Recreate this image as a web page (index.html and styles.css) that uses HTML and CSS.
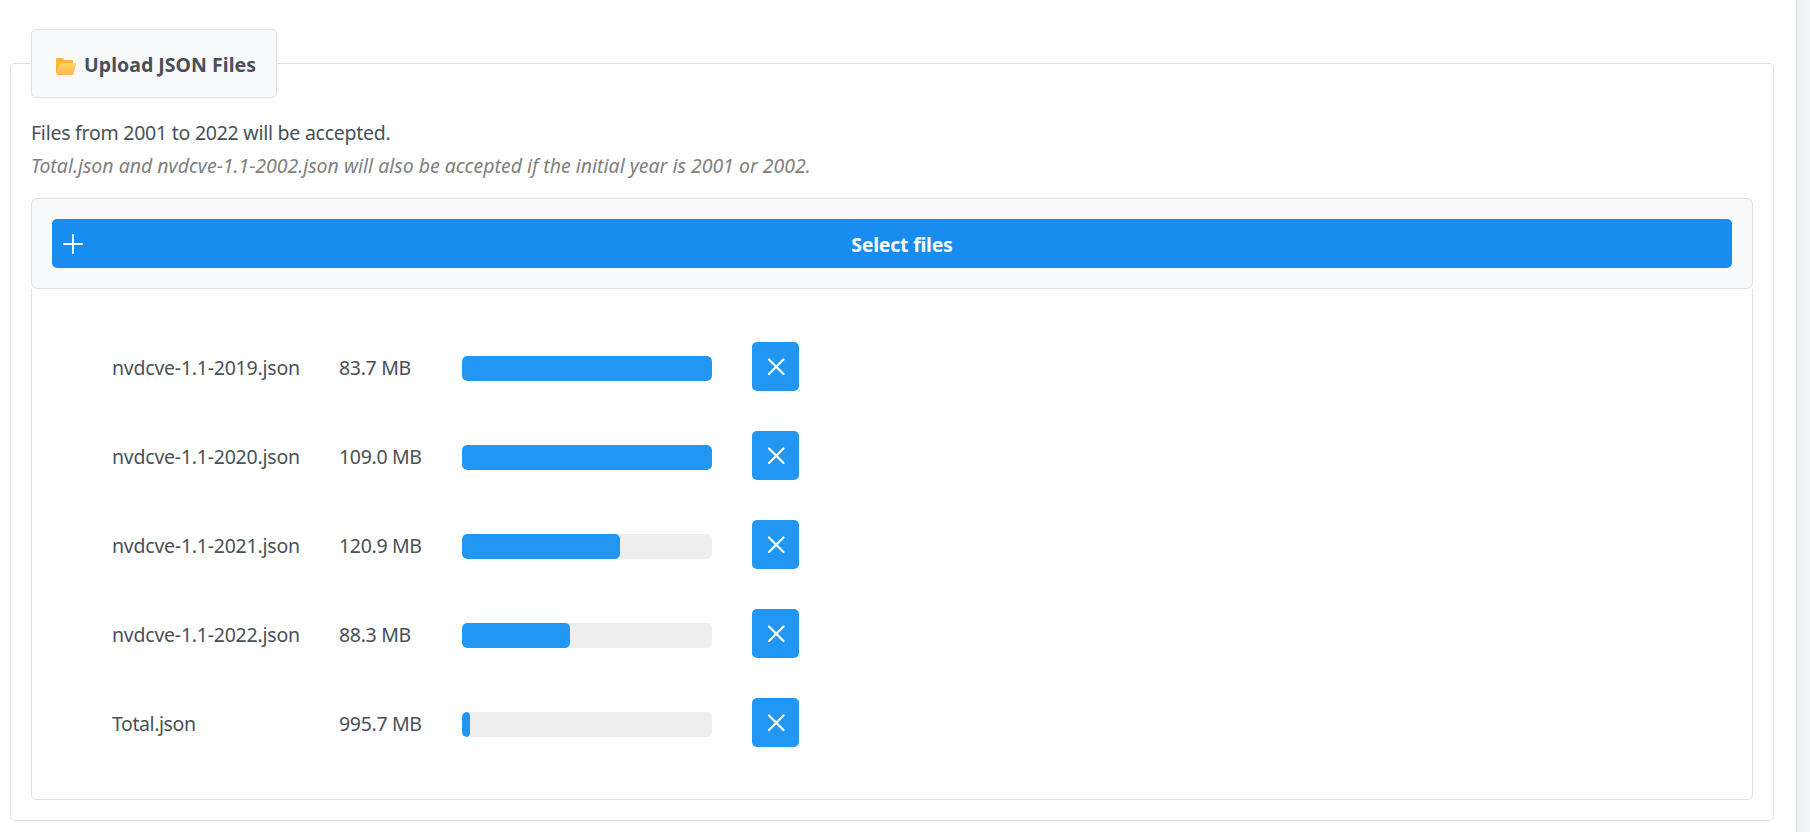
FILE: index.html
```html
<!DOCTYPE html>
<html lang="en">
<head>
<meta charset="utf-8">
<title>Upload JSON Files</title>
<link rel="stylesheet" href="styles.css">
</head>
<body>
<main class="card">
  <section class="fieldset">
    <h2 class="legend">
      <svg class="folder" viewBox="0 0 20 17"><defs><linearGradient id="front" x1="0" y1="0" x2="0" y2="1"><stop offset="0" stop-color="#ffd75e"/><stop offset="1" stop-color="#ffb55c"/></linearGradient></defs><path d="M0 1Q0 0 1 0H6.500L8.500 2H16Q17 2 17 3V6L6 15H1Q0 15 0 14Z" fill="#f9b83c"/><path d="M6.200 5H19Q20.300 5 20 6.200L17.800 15.600Q17.400 17 16 17H2Q.2 17 .6 15.300L3 7Q4 5 6.200 5Z" fill="url(#front)"/></svg>
      <span class="legend-text">Upload JSON Files</span>
    </h2>
    <p class="note">Files from 2001 to 2022 will be accepted.</p>
    <p class="note hint">Total.json and nvdcve-1.1-2002.json will also be accepted if the initial year is 2001 or 2002.</p>
    <div class="toolbar">
      <button class="select"><svg class="plus" viewBox="0 0 20 20"><path d="M10 1V19M1 10H19"/></svg><span class="select-label">Select files</span></button>
    </div>
    <div class="files">
      <div class="row"><span class="name">nvdcve-1.1-2019.json</span><span class="size">83.7 MB</span><div class="bar"><div class="fill" style="width:100%"></div></div><button class="remove" aria-label="Remove"><svg class="cross" viewBox="0 0 18 18"><path d="M2 1.500 16.500 16M16.500 1.500 2 16"/></svg></button></div>
      <div class="row"><span class="name">nvdcve-1.1-2020.json</span><span class="size">109.0 MB</span><div class="bar"><div class="fill" style="width:100%"></div></div><button class="remove" aria-label="Remove"><svg class="cross" viewBox="0 0 18 18"><path d="M2 1.500 16.500 16M16.500 1.500 2 16"/></svg></button></div>
      <div class="row"><span class="name">nvdcve-1.1-2021.json</span><span class="size">120.9 MB</span><div class="bar"><div class="fill" style="width:63%"></div></div><button class="remove" aria-label="Remove"><svg class="cross" viewBox="0 0 18 18"><path d="M2 1.500 16.500 16M16.500 1.500 2 16"/></svg></button></div>
      <div class="row"><span class="name">nvdcve-1.1-2022.json</span><span class="size">88.3 MB</span><div class="bar"><div class="fill" style="width:43%"></div></div><button class="remove" aria-label="Remove"><svg class="cross" viewBox="0 0 18 18"><path d="M2 1.500 16.500 16M16.500 1.500 2 16"/></svg></button></div>
      <div class="row"><span class="name total">Total.json</span><span class="size">995.7 MB</span><div class="bar"><div class="fill" style="width:3%"></div></div><button class="remove" aria-label="Remove"><svg class="cross" viewBox="0 0 18 18"><path d="M2 1.500 16.500 16M16.500 1.500 2 16"/></svg></button></div>
    </div>
  </section>
</main>
</body>
</html>
```
FILE: styles.css
```css
* { box-sizing: border-box; }
body {
  margin: 0;
  height: 832px;
  overflow: hidden;
  background: linear-gradient(to right, #eceef4 1797px, #f3f5fa 1810px);
  color: #495057;
  font-family: "Noto Sans", "Open Sans", sans-serif;
  font-size: 19.5px;
  line-height: 33px;
}
button { border: 0; margin: 0; padding: 0; font: inherit; color: #fff; border-radius: 5px; }
.card {
  width: 1797px;
  height: 832px;
  padding: 63px 22px 0 10px;
  background: #fff;
  border-right: 1px solid #dee2e6;
}
.fieldset {
  height: 758px;
  padding: 0 20px;
  border: 1px solid #dee2e6;
  border-radius: 5px;
}
.legend {
  display: flex;
  align-items: center;
  gap: 8px;
  width: 246px;
  height: 69px;
  margin: -35px 0 18px;
  padding: 0 0 0 24px;
  background: #f8f9fb;
  border: 1px solid #dee2e6;
  border-radius: 5px;
  font-size: 19.5px;
  font-weight: 700;
  white-space: nowrap;
}
.legend-text { padding-top: 2px; letter-spacing: 0.03px; }
.folder { width: 20px; height: 17px; margin-top: 6px; }
.note { margin: 0; white-space: nowrap; letter-spacing: -0.25px; }
.hint { color: #808080; font-style: italic; letter-spacing: -0.01px; }
.toolbar {
  height: 91px;
  margin-top: 16px;
  padding: 20px;
  background: #f8f9fb;
  border: 1px solid #dee2e6;
  border-radius: 6px;
}
.select {
  display: flex;
  align-items: center;
  width: 100%;
  height: 49px;
  padding: 0 11px;
  background: #188def;
  font-weight: 700;
}
.plus { width: 20px; height: 20px; margin-top: 1px; fill: none; stroke: #fff; stroke-width: 2; stroke-linecap: round; }
.select-label { flex: 1; padding-top: 2px; text-align: center; letter-spacing: -0.22px; }
.files {
  height: 511px;
  padding: 33px 60px 0 80px;
  border: 1px solid #dee2e6;
  border-top: 0;
  border-radius: 0 0 5px 5px;
}
.row {
  display: grid;
  grid-template-columns: 187px 83px 250px 47px;
  column-gap: 40px;
  align-items: center;
  height: 89px;
  white-space: nowrap;
}
.name { padding-top: 2px; letter-spacing: -0.23px; }
.total { letter-spacing: -0.42px; }
.size { padding-top: 2px; letter-spacing: -0.32px; }
.bar { height: 25px; margin-top: 4px; overflow: hidden; background: #eee; border-radius: 5px; }
.fill { height: 100%; background: #2196f3; border-radius: 5px; }
.remove { display: flex; justify-content: center; align-items: center; width: 47px; height: 49px; background: #2196f3; }
.cross { width: 18px; height: 18px; fill: none; stroke: #fff; stroke-width: 2.2; stroke-linecap: round; }
```
